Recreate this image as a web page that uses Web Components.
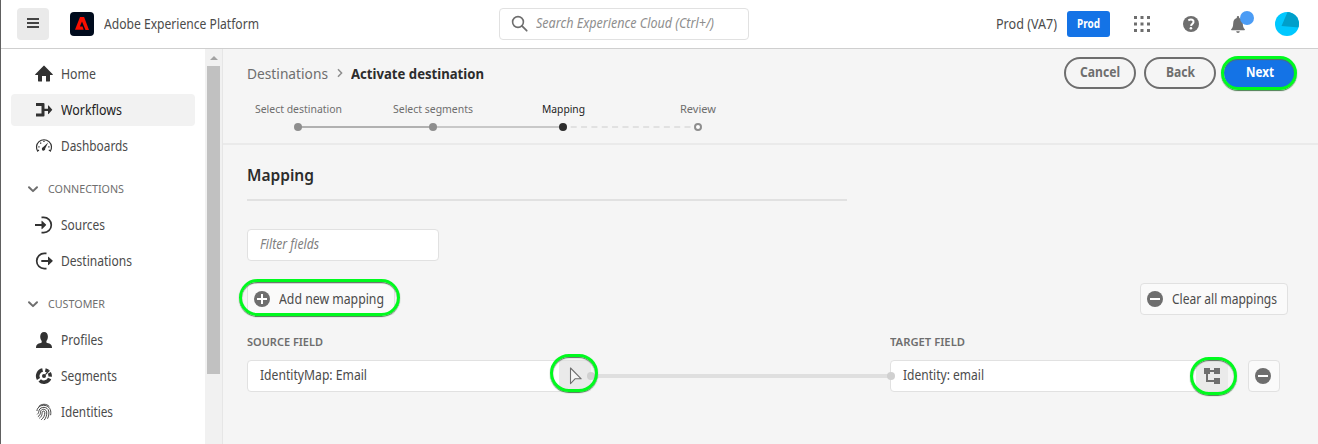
<!DOCTYPE html>
<html lang="en">
<head>
<meta charset="utf-8">
<title>Activate destination</title>
<style>
html,body{margin:0;padding:0}
body{width:1318px;height:444px;overflow:hidden;background:#f5f5f5;font-family:"Noto Sans","Open Sans",sans-serif;font-size:13.6px;color:#4b4b4b}
</style>
</head>
<body>
<aep-app></aep-app>
<script>
const define = (name, css, html, setup) => {
  const template = document.createElement('template');
  template.innerHTML = `<style>*{box-sizing:border-box}${css}</style>${html}`;
  customElements.define(name, class extends HTMLElement {
    constructor() {
      super();
      this.attachShadow({mode: 'open'}).append(template.content.cloneNode(true));
    }
    connectedCallback() { if (setup) setup(this, this.shadowRoot); }
  });
};

/* One line of text set in a fixed measure: w = width in px, s = font size */
define('fit-text', `
:host{display:inline-block;white-space:nowrap;line-height:20px;height:20px;flex:none}
span{display:inline-block;transform-origin:0 50%;white-space:nowrap}`,
'<span><slot></slot></span>', (el, root) => {
  const w = +el.getAttribute('w'), s = el.getAttribute('s');
  if (s) el.style.fontSize = s + 'px';
  const span = root.querySelector('span');
  const natural = span.getBoundingClientRect().width;
  el.style.width = w + 'px';
  if (natural) span.style.transform = `scaleX(${w / natural})`;
});

const ICONS = {
  menu: '<path d="M3 4h12v2H3zM3 8h12v2H3zM3 12h12v2H3z"/>',
  home: '<path d="M17.7 9.3 9.6.9a.8.8 0 0 0-1.2 0L.3 9.3c-.3.4-.2.8.3.8H3v6c0 .3.2.5.5.5H7V11h4v5.600h3.500c.3 0 .5-.2.5-.5v-6h2.400c.5 0 .6-.4.3-.8z"/>',
  flow: '<path d="M1 2h7.500a1 1 0 0 1 1 1v4.700H13V4.900c0-.4.3-.5.6-.3l3.500 3.900c.2.200.2.400 0 .6l-3.500 3.900c-.3.300-.6.100-.6-.2V10H9.500v4.500a1 1 0 0 1-1 1H1v-3h5.500V5H1z"/>',
  gauge: '<path d="M2.900 14.600A7.500 7.500 0 1 1 15.100 14.600" fill="none" stroke="currentColor" stroke-width="1.200"/><path d="M13.200 5.500 10.200 11.500a1.700 1.700 0 1 1-2.200-1.200z"/><path d="M3.300 9.300h1.300v1.300H3.300zM8.300 3.700h1.300v1.300H8.300zM13.200 9.300h1.300v1.300h-1.300zM5 5.500h1.300v1.300H5zM2.800 12.800h1.300V14H2.800zM13.800 12.800h1.300V14h-1.300z"/>',
  source: '<path d="M6.500 1.400h2.200a7.600 7.600 0 0 1 0 15.200H6.500" fill="none" stroke="currentColor" stroke-width="1.700"/><path d="M0 8h6.500V5.200c0-.4.4-.6.700-.3L11 8.600c.2.200.2.500 0 .7L7.200 13c-.3.300-.7.100-.7-.3V10H0z"/>',
  dest: '<path d="M11.500 1.400H9.300a7.600 7.600 0 0 0 0 15.200h2.200" fill="none" stroke="currentColor" stroke-width="1.700"/><path d="M6.300 8H13V5.200c0-.4.4-.6.700-.3l3.900 3.700c.2.200.2.500 0 .7L13.700 13c-.3.300-.7.100-.7-.3V10H6.300z"/>',
  user: '<path d="M11.400 11.100v-1.200c1-1.100 1.500-2.500 1.500-4.300C12.900 2.700 11.500 1 9.100 1S5.200 2.700 5.200 5.600c0 1.800.6 3.200 1.500 4.300v1.200c0 .6-.3.800-.9.900C2.500 12.500 1 14 1 16.400V17h16v-.6c0-2.400-1.500-3.900-4.700-4.400-.6-.1-.9-.3-.9-.9z"/>',
  segment: '<g fill="none" stroke="currentColor" stroke-width="3.600"><path d="M7.600 2.900a6.200 6.200 0 0 0-4.100 9.100"/><path d="M4.700 13.500a6.200 6.200 0 0 0 9.900-1.900"/><path d="M10.300 2.900a6.200 6.200 0 0 1 2.800 1.400"/><path d="M14.300 5.900a6.200 6.200 0 0 1 .9 3.800"/></g><circle cx="9" cy="9" r="2"/><path d="m10 7.300 4-4.300.9.800-4.100 4.300z"/>',
  finger: '<g fill="none" stroke="currentColor" stroke-width=".9"><path d="M3.600 3.600C6.500.6 11.500.4 14.400 3.600M1.900 8c.4-4.600 5.600-6.900 9.700-5.100 3.900 1.700 4.700 5.300 4 9.300M2.200 11.400C4 10 3.600 8.600 4.100 7.200c1.500-4 8.600-3.800 9.600.8.500 2.500 0 5.500-1.200 7.700M2.900 13.700C6.400 11.500 5 9 6 7.500c1.600-2.300 5.400-1.100 5.700 1.600.3 3-.8 6-2.500 8M4.300 15.300C7.300 13 6.900 11 7.200 9.200c.3-1.600 2.500-1.500 2.600.2.100 3-1.300 5.600-3.600 7.400"/></g>',
  chevron: '<path d="m5 7.200 4 3.900L13 7.200" fill="none" stroke="currentColor" stroke-width="2" stroke-linecap="round" stroke-linejoin="round"/>',
  next: '<path d="m7 5.200 3.600 3.800L7 12.800" fill="none" stroke="currentColor" stroke-width="1.500"/>',
  search: '<circle cx="7" cy="7" r="5.400" fill="none" stroke="currentColor" stroke-width="1.600"/><path d="m10.900 10.900 4.800 4.800" stroke="currentColor" stroke-width="1.800" stroke-linecap="round"/>',
  apps: '<path d="M1 1h3v3H1zM7.500 1h3v3h-3zM14 1h3v3h-3zM1 7.500h3v3H1zM7.500 7.500h3v3h-3zM14 7.500h3v3h-3zM1 14h3v3H1zM7.500 14h3v3h-3zM14 14h3v3h-3z"/>',
  help: '<circle cx="9" cy="9" r="8"/><path d="M6.300 5.300c3-1.700 5.600-.4 5.200 1.900-.3 1.600-2.300 1.900-2.500 3.600" fill="none" stroke="#fff" stroke-width="2"/><circle cx="8.900" cy="13.300" r="1.300" fill="#fff"/>',
  bell: '<path d="M7.200 16.200h3.600a1.800 1.800 0 0 1-3.600 0zM2.600 15.200c-.5 0-.7-.5-.4-.9C3.600 12.800 4.100 11.500 4.200 8.500c.2-3 1.300-4.900 3.600-5.400V2.400C7.800 1.600 8.300 1 9 1s1.200.6 1.200 1.400v.7c2.300.5 3.400 2.400 3.600 5.400.1 3 .6 4.300 2 5.800.3.400.1.900-.4.900z"/>',
  plus: '<circle cx="9" cy="9" r="8"/><path d="M4 8h4V4h2v4h4v2h-4v4H8v-4H4z" fill="#fff"/>',
  minus: '<circle cx="9" cy="9" r="8"/><path d="M4 8h10v2H4z" fill="#fff"/>',
  cursor: '<path d="M4.500 1v15.600l4.500-4.800h6.200z" fill="#f5f5f5" stroke="currentColor" stroke-width="1.100" stroke-linejoin="round"/>',
  tree: '<path d="M1 1h6v2h4V1h6v6h-6V5H7v2H5v6h6v-2h6v6h-6v-2H3V7H1z"/>'
};
customElements.define('ui-icon', class extends HTMLElement {
  constructor() { super(); this.attachShadow({mode: 'open'}); }
  connectedCallback() {
    this.shadowRoot.innerHTML = `<style>:host{display:block;flex:none;width:18px;height:18px}svg{display:block;fill:currentColor}</style><svg width="18" height="18" viewBox="0 0 18 18">${ICONS[this.getAttribute('name')]}</svg>`;
  }
});

/* Green outline laid over a control; the position comes from the user */
define('focus-ring', `
:host{position:absolute;z-index:3;border:3px solid #00fa1e;border-radius:19px;box-shadow:0 1px 1px #4a7d4f,inset 0 1px 1px #5d6d5e;pointer-events:none;box-sizing:border-box}`, '');

define('pill-button', `
:host{display:flex;box-sizing:border-box;width:72px;height:32px;border:2px solid #6e6e6e;border-radius:16px;align-items:center;justify-content:center;font-weight:700;color:#6e6e6e;position:relative;padding-bottom:2px}
:host([primary]){background:#1473e6;border-color:#1473e6;color:#fff}`, '<slot></slot>');

define('action-button', `
:host{display:flex;box-sizing:border-box;height:32px;border:1px solid #e1e1e1;border-radius:4px;background:#fafafa;align-items:center;padding:0 10px 0 5px;gap:8px;position:relative}
ui-icon{color:#6e6e6e}`, '<ui-icon></ui-icon><slot></slot>', (el, root) => {
  const icon = root.querySelector('ui-icon');
  icon.setAttribute('name', el.getAttribute('icon'));
  icon.connectedCallback();
});

define('field-box', `
:host{display:flex;box-sizing:border-box;height:32px;border:1px solid #e1e1e1;border-radius:4px;background:#fff;align-items:center;justify-content:space-between;padding-left:12px;position:relative}
::slotted(fit-text){margin-bottom:2px}`, '<slot></slot><slot name="end"></slot>');

define('picker-button', `
:host{display:flex;width:32px;height:30px;margin-right:-1px;background:#eaeaea;align-items:center;justify-content:center;color:#6e6e6e}`, '<slot></slot>');

define('nav-item', `
:host{display:flex;box-sizing:border-box;height:32px;width:184px;margin:0 0 4px 10px;padding-left:24px;align-items:center;gap:8px;border-radius:4px;color:#4b4b4b}
:host([selected]){background:#f2f2f2;color:#222}
ui-icon{color:#323232}`, '<ui-icon></ui-icon><slot></slot>', (el, root) => {
  const icon = root.querySelector('ui-icon');
  icon.setAttribute('name', el.getAttribute('icon'));
  icon.connectedCallback();
});

define('nav-heading', `
:host{display:flex;height:32px;margin:11px 0 4px 23px;align-items:center;gap:6px;color:#6e6e6e}`, '<ui-icon name="chevron"></ui-icon><slot></slot>');

define('app-header', `
:host{display:flex;box-sizing:border-box;height:49px;background:#fff;border-bottom:1px solid #cfcfcf;align-items:center;padding:0 18px 0 16px}
.menu{width:32px;height:32px;background:#eaeaea;border-radius:4px;display:flex;align-items:center;justify-content:center;color:#444;padding-bottom:2px}
.logo{margin:0 10px 0 21px;display:block}
field-box{width:250px;margin-left:240px;padding:0 0 0 11px;justify-content:flex-start;color:#8e8e8e;font-style:italic}
field-box ui-icon{margin-right:7px;color:#6e6e6e}
.right{margin-left:auto;display:flex;align-items:center;color:#6e6e6e}
.env{color:#4b4b4b}
.prod{width:43px;height:26px;margin:0 23px 0 10px;background:#1473e6;border-radius:3px;color:#fff;font-weight:700;display:flex;align-items:center;justify-content:center}
.bell{position:relative;margin:0 27px 0 29px}
.bell i{position:absolute;left:11px;top:-4px;width:14px;height:14px;border-radius:50%;background:#4b9cf5}
.apps{margin-right:31px}`, `
<div class="menu"><ui-icon name="menu"></ui-icon></div>
<svg class="logo" width="24" height="24" viewBox="0 0 24 24"><rect width="24" height="24" rx="4" fill="#000b1d"/><path d="M10 5h4.100L19 18h-3.500L12 9.400 9.900 14.500h2.600l1.200 3.300H5z" fill="#fa0f00"/></svg>
<fit-text w="155" s="14">Adobe Experience Platform</fit-text>
<field-box><ui-icon name="search"></ui-icon><fit-text w="178" s="13.6">Search Experience Cloud (Ctrl+/)</fit-text></field-box>
<div class="right">
<fit-text class="env" w="61">Prod (VA7)</fit-text>
<div class="prod"><fit-text w="23" s="12">Prod</fit-text></div>
<ui-icon class="apps" name="apps"></ui-icon><ui-icon name="help"></ui-icon>
<div class="bell"><ui-icon name="bell"></ui-icon><i></i></div>
<svg width="26" height="26" viewBox="0 0 26 26"><defs><clipPath id="disc"><circle cx="13" cy="13" r="12"/></clipPath></defs><circle cx="13" cy="13" r="12" fill="#00c8ff"/><path clip-path="url(#disc)" d="M14 0 7.500 15 26 16.500V0z" fill="#009fca"/></svg>
</div>`);

define('side-nav', `
:host{display:flex;width:222px;background:#fff;flex:none;border-right:1px solid #e6e6e6;box-sizing:border-box}
nav{width:204px;padding-top:9px}
.scroll{width:17px;background:#f1f1f1;padding:7px 2px 0;display:flex;flex-direction:column;align-items:center}
.thumb{width:13px;height:308px;margin-top:6px;background:#c1c1c1}`, `
<nav>
<nav-item icon="home"><fit-text w="35">Home</fit-text></nav-item>
<nav-item icon="flow" selected><fit-text w="61">Workflows</fit-text></nav-item>
<nav-item icon="gauge"><fit-text w="67">Dashboards</fit-text></nav-item>
<nav-heading><fit-text w="76" s="11">CONNECTIONS</fit-text></nav-heading>
<nav-item icon="source"><fit-text w="44">Sources</fit-text></nav-item>
<nav-item icon="dest"><fit-text w="71">Destinations</fit-text></nav-item>
<nav-heading><fit-text w="57" s="11">CUSTOMER</fit-text></nav-heading>
<nav-item icon="user"><fit-text w="42">Profiles</fit-text></nav-item>
<nav-item icon="segment"><fit-text w="56">Segments</fit-text></nav-item>
<nav-item icon="finger"><fit-text w="52">Identities</fit-text></nav-item>
</nav>
<div class="scroll"><svg width="8" height="4"><path d="M4 0 8 4H0z" fill="#a3a3a3"/></svg><div class="thumb"></div></div>`);

define('step-track', `
:host{display:block;width:540px;margin-left:5px;color:#6e6e6e}
.labels{display:grid;grid-template-columns:140px 130px 130px 140px;justify-items:center}
.on{color:#222}
svg{display:block;margin-top:3px}`, `
<div class="labels"><fit-text w="87" s="11.5">Select destination</fit-text><fit-text w="80" s="11.5">Select segments</fit-text><fit-text class="on" w="43" s="11.5">Mapping</fit-text><fit-text w="36" s="11.5">Review</fit-text></div>
<svg width="540" height="10" viewBox="0 0 540 10"><path d="M70 5h135" stroke="#b1b1b1" stroke-width="2"/><path d="M205 5h130" stroke="#c8c8c8" stroke-width="2"/><path d="M342.700 5h121" stroke="#e1e1e1" stroke-width="2" stroke-dasharray="6 4.350"/><circle cx="70" cy="5" r="4" fill="#8e8e8e"/><circle cx="205" cy="5" r="4" fill="#8e8e8e"/><circle cx="335" cy="5" r="4" fill="#2c2c2c"/><circle cx="470" cy="5" r="3" fill="#fff" stroke="#8e8e8e" stroke-width="2"/></svg>`);

define('workflow-bar', `
:host{display:flex;box-sizing:border-box;height:96px;border-bottom:2px solid #eaeaea;justify-content:space-between;padding:0 22px 0 0}
.crumbs{display:flex;align-items:center;height:20px;margin:14px 0 16px 24px;color:#6e6e6e}
.crumbs ui-icon{margin:0 2px 0 3px;color:#8e8e8e}
b{color:#2c2c2c}
.actions{display:flex;gap:8px;margin-top:8px}
focus-ring{left:-5px;top:-3px;width:76px;height:34px}`, `
<div><div class="crumbs"><fit-text w="81" s="14.600">Destinations</fit-text><ui-icon name="next"></ui-icon><b><fit-text w="133" s="14.600">Activate destination</fit-text></b></div><step-track></step-track></div>
<div class="actions"><pill-button><fit-text w="40">Cancel</fit-text></pill-button><pill-button><fit-text w="29">Back</fit-text></pill-button><pill-button primary><fit-text w="28">Next</fit-text><focus-ring></focus-ring></pill-button></div>`);

define('mapping-panel', `
:host{display:block;padding:20px 30px 0 24px}
h1{margin:0;font-size:16px;line-height:20px;height:20px;font-weight:600;color:#2c2c2c}
hr{border:0;height:2px;width:600px;margin:14px 0 28px;background:#e1e1e1}
.filter{width:192px;color:#808080;font-style:italic}
.tools{display:flex;justify-content:space-between;margin-top:22px}
.add focus-ring{left:-9px;top:-5px;width:161px;height:37px}
.heads,.row{display:grid;grid-template-columns:344px 299px 338px 52px}
.heads{margin-top:17px;font-weight:600;color:#6e6e6e}
.heads :last-child{grid-column:3}
.row{margin-top:8px}
.line{height:4px;align-self:center;background:#dfdfdf;position:relative;z-index:1}
.line:before,.line:after{content:"";position:absolute;top:-2px;width:8px;height:8px;border-radius:50%;background:#d0d0d0}
.line:before{left:-4px}.line:after{right:-5px}
.source focus-ring{right:-8px;top:-7px;width:48px;height:38px}
.target focus-ring{right:-10px;top:-4px;width:47px;height:38px}
.remove{margin-left:20px;width:32px;padding:0 5px}`, `
<h1><fit-text w="67" s="16">Mapping</fit-text></h1><hr>
<field-box class="filter"><fit-text w="59">Filter fields</fit-text></field-box>
<div class="tools"><action-button class="add" icon="plus"><fit-text w="105">Add new mapping</fit-text><focus-ring></focus-ring></action-button><action-button icon="minus"><fit-text w="105">Clear all mappings</fit-text></action-button></div>
<div class="heads"><fit-text w="76" s="10.600">SOURCE FIELD</fit-text><fit-text w="75" s="10.600">TARGET FIELD</fit-text></div>
<div class="row">
<field-box class="source"><fit-text w="107">IdentityMap: Email</fit-text><picker-button slot="end"><ui-icon name="cursor"></ui-icon></picker-button><focus-ring slot="end"></focus-ring></field-box>
<div class="line"></div>
<field-box class="target"><fit-text w="81">Identity: email</fit-text><picker-button slot="end"><ui-icon name="tree"></ui-icon></picker-button><focus-ring slot="end"></focus-ring></field-box>
<action-button class="remove" icon="minus"></action-button>
</div>`);

define('aep-app', `
:host{display:flex;flex-direction:column;box-sizing:border-box;width:1318px;height:444px;border-left:1px solid #606060;background:#f5f5f5}
.body{display:flex;flex:1;min-height:0}
main{flex:1;min-width:0}`, `
<app-header></app-header><div class="body"><side-nav></side-nav><main><workflow-bar></workflow-bar><mapping-panel></mapping-panel></main></div>`);
</script>
</body>
</html>
